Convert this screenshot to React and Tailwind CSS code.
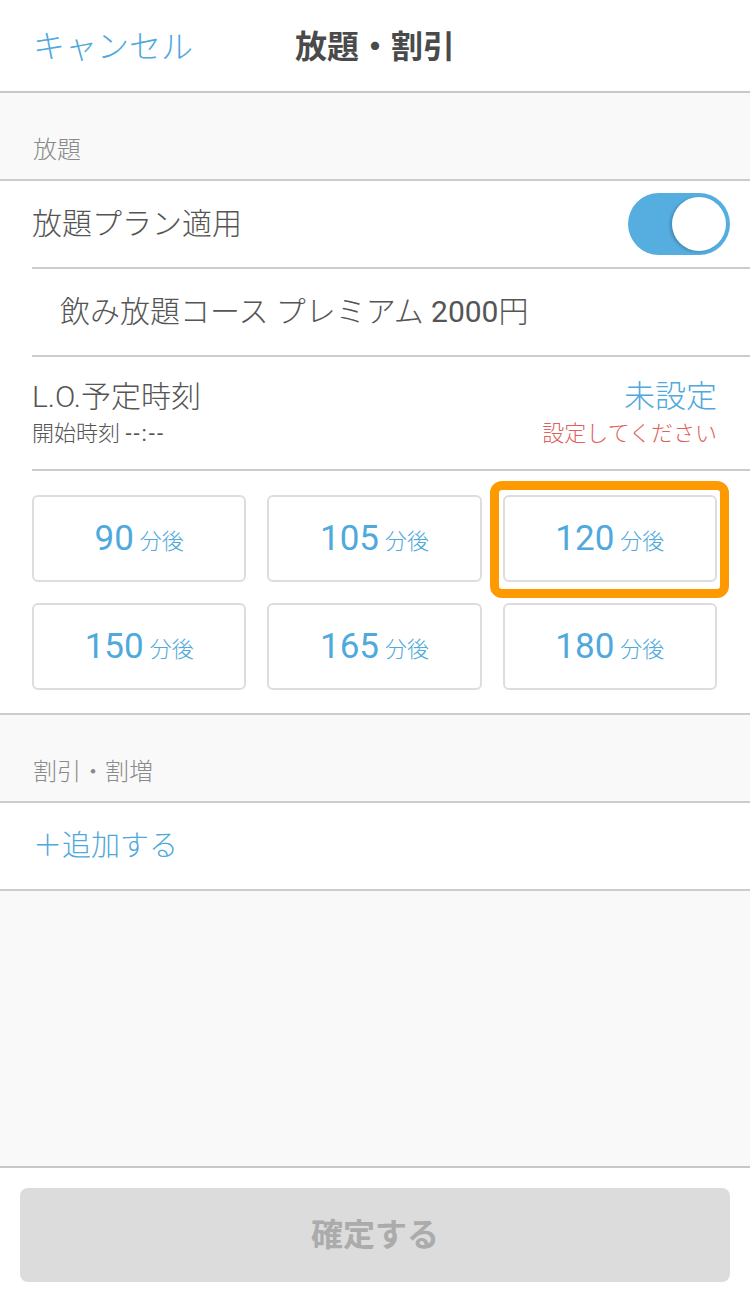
import { useState } from "react";

const font = { fontFamily: 'Roboto, "Noto Sans CJK JP", "Noto Sans", sans-serif' };

const durations = [90, 105, 120, 150, 165, 180];

const SectionLabel = ({ children }) => (
  <div className="h-[88px] bg-[#f9f9f9] border-b-2 border-[#cccccc] flex items-end px-[33px] pb-[17px]">
    <span className="text-[24px] font-light text-[#8a8a8a] leading-none">{children}</span>
  </div>
);

const App = () => {
  const [enabled, setEnabled] = useState(true);
  const [selected] = useState(120);

  return (
    <div className="w-[750px] h-[1298px] bg-[#f9f9f9] flex flex-col" style={font}>
      {/* Header */}
      <div className="relative h-[93px] bg-white border-b-2 border-[#c8c8c8] flex items-center px-[33px] pt-[3px]">
        <span className="text-[32px] font-light text-[#4fa9dd] leading-none">キャンセル</span>
        <span className="absolute left-1/2 -translate-x-1/2 text-[32px] font-bold text-[#4a4a4a] leading-none">
          放題・割引
        </span>
      </div>

      <SectionLabel>放題</SectionLabel>

      <div className="bg-white border-b-2 border-[#cccccc]">
        {/* Toggle row */}
        <div className="ml-[32px] h-[88px] border-b-2 border-[#cccccc] flex items-center justify-between pr-[20px]">
          <span className="text-[30px] font-light text-[#555555] leading-none">放題プラン適用</span>
          <button
            onClick={() => setEnabled(!enabled)}
            className={`w-[102px] h-[62px] rounded-full flex items-center p-[4px] ${
              enabled ? "bg-[#55ade0] justify-end" : "bg-[#e5e5e5] justify-start"
            }`}
          >
            <span className="w-[54px] h-[54px] rounded-full bg-white shadow-[-2px_1px_3px_rgba(0,0,0,0.2)]" />
          </button>
        </div>

        {/* Plan row */}
        <div className="ml-[32px] h-[88px] border-b-2 border-[#cccccc] flex items-center pl-[28px]">
          <span className="text-[30px] font-light text-[#555555] leading-none">
            飲み放題コース プレミアム <span className="font-normal">2000</span>円
          </span>
        </div>

        {/* L.O. row */}
        <div className="ml-[32px] h-[114px] border-b-2 border-[#cccccc] flex items-center justify-between pr-[33px]">
          <div className="flex flex-col gap-[11px]">
            <span className="text-[30px] font-light text-[#555555] leading-[30px]">L.O.予定時刻</span>
            <span className="text-[22px] font-light text-[#555555] leading-[22px]">
              開始時刻 <span className="font-normal tracking-[2px]">--:--</span>
            </span>
          </div>
          <div className="flex flex-col items-end gap-[11px]">
            <span className="text-[31px] font-light text-[#4fa9dd] leading-[30px]">未設定</span>
            <span className="text-[22px] font-light text-[#e0615a] leading-[22px]">設定してください</span>
          </div>
        </div>

        {/* Duration buttons */}
        <div className="grid grid-cols-3 gap-x-[21px] gap-y-[21px] pl-[32px] pr-[33px] pt-[24px] pb-[23px]">
          {durations.map((d) => (
            <div key={d} className="relative">
              <div className="h-[87px] border-2 border-[#dddddd] rounded-[6px] bg-white flex items-center justify-center gap-[6px] text-[#4fa9dd]">
                <span className="text-[35px] font-normal leading-none">{d}</span>
                <span className="text-[22px] font-light leading-none mt-[6px]">分後</span>
              </div>
              {d === selected && (
                <div className="absolute -left-[13px] -right-[12px] -top-[14px] -bottom-[16px] border-[9px] border-[#ff9900] rounded-[12px] pointer-events-none" />
              )}
            </div>
          ))}
        </div>
      </div>

      <SectionLabel>割引・割増</SectionLabel>

      <div className="h-[88px] bg-white border-b-2 border-[#cccccc] flex items-center px-[33px]">
        <span className="text-[29px] font-light text-[#4fa9dd] leading-none">＋追加する</span>
      </div>

      <div className="flex-1" />

      {/* Footer */}
      <div className="h-[132px] bg-white border-t-2 border-[#c8c8c8] px-[20px] pt-[20px]">
        <button className="w-full h-[94px] rounded-[8px] bg-[#dcdcdc] text-[32px] font-bold text-[#ababab]">
          確定する
        </button>
      </div>
    </div>
  );
};

export default App;
